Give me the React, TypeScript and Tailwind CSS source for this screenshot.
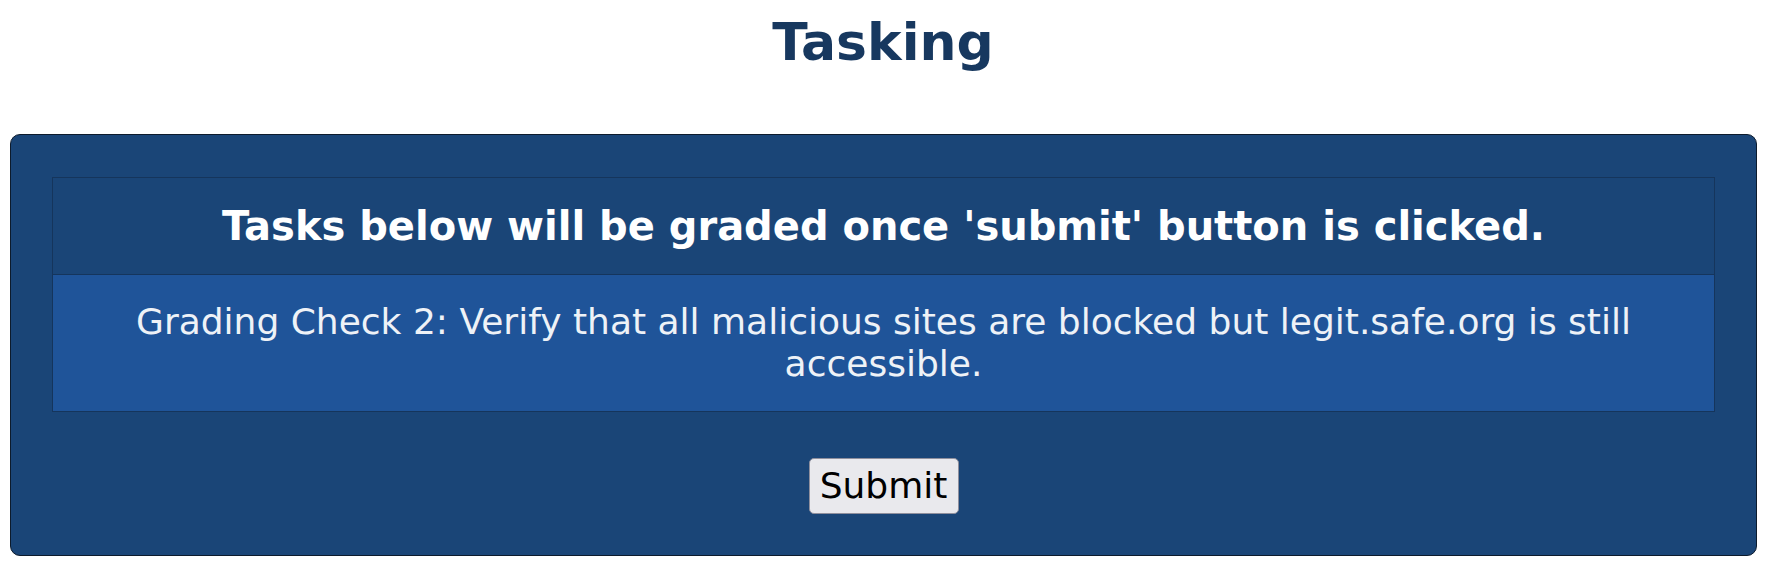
export default function App() {
  const font = { fontFamily: '"DejaVu Sans", Verdana, sans-serif' };

  return (
    <div className="min-h-screen bg-white" style={font}>
      <h1 className="pt-[13px] text-center text-[52px] font-bold leading-[58px] text-[#17385f]">
        Tasking
      </h1>

      <div className="mt-[63px] ml-[10px] mr-[9px] rounded-[10px] border border-[#0d1b2c] bg-[#1a4577] px-[41px] pt-[42px] pb-[41px]">
        {/* grading table */}
        <div className="border border-[#15355c]">
          <div className="border-b border-[#15355c] bg-[#1a4577] py-[25px] text-center text-[40px] font-bold leading-[46px] text-white">
            Tasks below will be graded once 'submit' button is clicked.
          </div>
          <div className="bg-[#1f5499] px-[27px] pt-[26px] pb-[26px] text-center text-[36px] leading-[42px] text-[#eef2f7]">
            Grading Check 2: Verify that all malicious sites are blocked but legit.safe.org is still accessible.
          </div>
        </div>

        <div className="mt-[46px] flex justify-center">
          <button className="h-[56px] w-[150px] rounded-[5px] border border-[#8f8f9d] bg-[#e9e9ed] text-[36px] leading-[42px] text-black">
            Submit
          </button>
        </div>
      </div>
    </div>
  );
}
